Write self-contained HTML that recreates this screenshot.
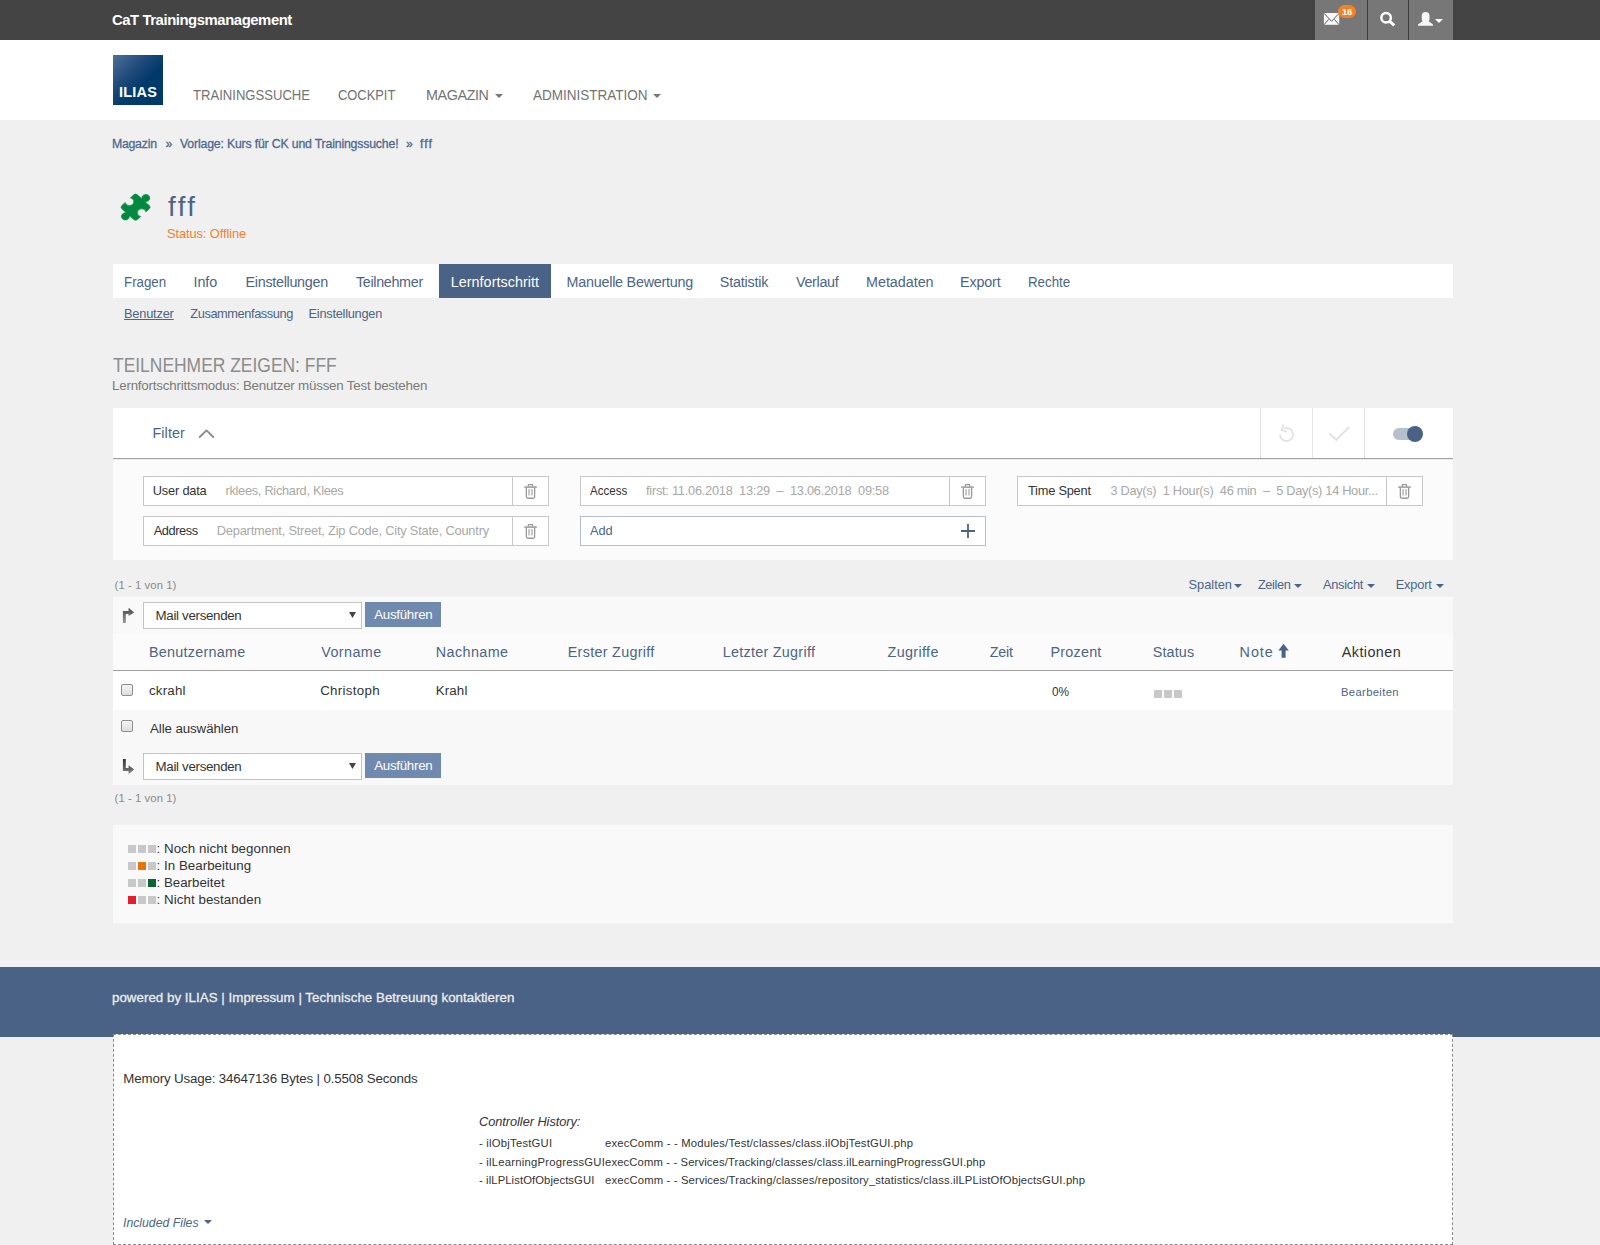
<!DOCTYPE html>
<html><head><meta charset="utf-8"><title>ILIAS</title>
<style>
html,body{margin:0;padding:0;}
body{width:1600px;height:1245px;overflow:hidden;position:relative;background:#f0f0f0;font-family:"Liberation Sans", sans-serif;}
</style></head><body>
<div style="position:absolute;left:0px;top:0px;width:1600px;height:40px;background:#444;"></div>
<div style="position:absolute;left:1315px;top:0px;width:138px;height:40px;background:#777;"></div>
<div style="position:absolute;left:1367px;top:0px;width:1px;height:40px;background:#3d3d3d;"></div>
<div style="position:absolute;left:1408px;top:0px;width:1px;height:40px;background:#3d3d3d;"></div>
<div style="position:absolute;left:0px;top:40px;width:1600px;height:80px;background:#fff;"></div>
<div style="position:absolute;left:113px;top:55px;width:50px;height:50px;background:linear-gradient(135deg,#4f6f99 0%,#1f4a7a 35%,#003a6b 60%,#003a6b 100%);"></div>
<div style="position:absolute;left:113px;top:82px;width:50px;text-align:center;font-weight:700;font-size:14.5px;line-height:20px;color:#fff;letter-spacing:0.2px">ILIAS</div>
<svg style="position:absolute;left:495px;top:94px" width="8" height="4" viewBox="0 0 8 4"><path d="M0 0H8L4 4Z" fill="#777"/></svg>
<svg style="position:absolute;left:653px;top:94px" width="8" height="4" viewBox="0 0 8 4"><path d="M0 0H8L4 4Z" fill="#777"/></svg>
<svg style="position:absolute;left:115px;top:188px" width="42" height="38" viewBox="0 0 42 38"><g transform="translate(20.6 19.2) scale(1.0 0.9) rotate(45)"><path d="M-8.4 -11 L-2.0 -11 A4.0 4.0 0 1 1 2.0 -11 L8.4 -11 Q11 -11 11 -8.4 L11 -3.6 A4.3 4.3 0 1 0 11 3.6 L11 8.4 Q11 11 8.4 11 L2.0 11 A4.0 4.0 0 1 1 -2.0 11 L-8.4 11 Q-11 11 -11 8.4 L-11 3.6 A4.3 4.3 0 1 0 -11 -3.6 L-11 -8.4 Q-11 -11 -8.4 -11 Z" fill="#02893f" stroke="#02893f" stroke-width="0.6" stroke-linejoin="round"/></g></svg>
<div style="position:absolute;left:113px;top:264px;width:1340px;height:34px;background:#fff;"></div>
<div style="position:absolute;left:439px;top:264px;width:112px;height:34px;background:#4a6286;"></div>
<div style="position:absolute;left:113px;top:408px;width:1340px;height:50px;background:#fff;"></div>
<div style="position:absolute;left:113px;top:458px;width:1340px;height:1px;background:#a0a0a0;"></div>
<div style="position:absolute;left:113px;top:459px;width:1340px;height:1px;background:#ececec;"></div>
<div style="position:absolute;left:113px;top:460px;width:1340px;height:100px;background:#fbfbfb;"></div>
<div style="position:absolute;left:1260px;top:408px;width:1px;height:50px;background:#e3e3e3;"></div>
<div style="position:absolute;left:1312px;top:408px;width:1px;height:50px;background:#e3e3e3;"></div>
<div style="position:absolute;left:1364px;top:408px;width:1px;height:50px;background:#e3e3e3;"></div>
<svg style="position:absolute;left:198px;top:428px" width="17" height="10" viewBox="0 0 17 10"><path d="M1.7 9 L8.5 2.4 L15.3 9" fill="none" stroke="#8a8a8a" stroke-width="1.8" stroke-linecap="round" stroke-linejoin="round"/></svg>
<svg style="position:absolute;left:1277px;top:424px" width="19" height="19" viewBox="0 0 19 19"><path d="M3.0 10.6 A6.5 6.5 0 1 0 7.4 4.4" fill="none" stroke="#e0e0e0" stroke-width="1.7"/><path d="M6.6 0.4 L4.7 5.9 L10 8.0" fill="none" stroke="#e0e0e0" stroke-width="1.7"/></svg>
<svg style="position:absolute;left:1327px;top:424px" width="25" height="19" viewBox="0 0 25 19"><path d="M2.6 9.4 L9.3 16 L22.3 2.9" fill="none" stroke="#e0e0e0" stroke-width="1.8"/></svg>
<svg style="position:absolute;left:1392px;top:425px" width="33" height="18" viewBox="0 0 33 18"><rect x="1" y="3" width="28" height="12" rx="6" fill="#b5bfcd"/><circle cx="23" cy="9" r="8" fill="#4a6286"/></svg>
<div style="position:absolute;left:143px;top:476px;width:406px;height:30px;background:#fff;border:1px solid #c8c8c8;box-sizing:border-box;"></div>
<div style="position:absolute;left:512px;top:476px;width:1px;height:30px;background:#c8c8c8;"></div>
<svg style="position:absolute;left:524px;top:483px" width="13" height="16" viewBox="0 0 13 16"><g fill="none" stroke="#999" stroke-width="1.3"><path d="M0.2 4.1 H12.8" stroke-width="1.5"/><path d="M3.9 3.6 L4.5 1.7 H8.4 L9 3.6" stroke-width="1.2"/><path d="M2.35 4.8 V13.6 Q2.35 15.25 4 15.25 H9 Q10.65 15.25 10.65 13.6 V4.8"/></g><path d="M5.05 6.1 V12.6 M8 6.1 V12.6" stroke="#bbb" stroke-width="1.6"/></svg>
<div style="position:absolute;left:143px;top:516px;width:406px;height:30px;background:#fff;border:1px solid #c8c8c8;box-sizing:border-box;"></div>
<div style="position:absolute;left:512px;top:516px;width:1px;height:30px;background:#c8c8c8;"></div>
<svg style="position:absolute;left:524px;top:523px" width="13" height="16" viewBox="0 0 13 16"><g fill="none" stroke="#999" stroke-width="1.3"><path d="M0.2 4.1 H12.8" stroke-width="1.5"/><path d="M3.9 3.6 L4.5 1.7 H8.4 L9 3.6" stroke-width="1.2"/><path d="M2.35 4.8 V13.6 Q2.35 15.25 4 15.25 H9 Q10.65 15.25 10.65 13.6 V4.8"/></g><path d="M5.05 6.1 V12.6 M8 6.1 V12.6" stroke="#bbb" stroke-width="1.6"/></svg>
<div style="position:absolute;left:580px;top:476px;width:406px;height:30px;background:#fff;border:1px solid #c8c8c8;box-sizing:border-box;"></div>
<div style="position:absolute;left:949px;top:476px;width:1px;height:30px;background:#c8c8c8;"></div>
<svg style="position:absolute;left:961px;top:483px" width="13" height="16" viewBox="0 0 13 16"><g fill="none" stroke="#999" stroke-width="1.3"><path d="M0.2 4.1 H12.8" stroke-width="1.5"/><path d="M3.9 3.6 L4.5 1.7 H8.4 L9 3.6" stroke-width="1.2"/><path d="M2.35 4.8 V13.6 Q2.35 15.25 4 15.25 H9 Q10.65 15.25 10.65 13.6 V4.8"/></g><path d="M5.05 6.1 V12.6 M8 6.1 V12.6" stroke="#bbb" stroke-width="1.6"/></svg>
<div style="position:absolute;left:580px;top:516px;width:406px;height:30px;background:#fff;border:1px solid #b3bfd0;box-sizing:border-box;"></div>
<svg style="position:absolute;left:960px;top:523px" width="16" height="16" viewBox="0 0 16 16"><path d="M8 1 V15 M1 8 H15" stroke="#4a6286" stroke-width="1.8"/></svg>
<div style="position:absolute;left:1017px;top:476px;width:406px;height:30px;background:#fff;border:1px solid #c8c8c8;box-sizing:border-box;"></div>
<div style="position:absolute;left:1386px;top:476px;width:1px;height:30px;background:#c8c8c8;"></div>
<svg style="position:absolute;left:1398px;top:483px" width="13" height="16" viewBox="0 0 13 16"><g fill="none" stroke="#999" stroke-width="1.3"><path d="M0.2 4.1 H12.8" stroke-width="1.5"/><path d="M3.9 3.6 L4.5 1.7 H8.4 L9 3.6" stroke-width="1.2"/><path d="M2.35 4.8 V13.6 Q2.35 15.25 4 15.25 H9 Q10.65 15.25 10.65 13.6 V4.8"/></g><path d="M5.05 6.1 V12.6 M8 6.1 V12.6" stroke="#bbb" stroke-width="1.6"/></svg>
<div style="position:absolute;left:113px;top:597px;width:1340px;height:37px;background:#f9f9f9;"></div>
<div style="position:absolute;left:113px;top:634px;width:1340px;height:35px;background:#fbfbfb;"></div>
<div style="position:absolute;left:113px;top:669px;width:1340px;height:1px;background:#fff;"></div>
<div style="position:absolute;left:113px;top:670px;width:1340px;height:1px;background:#a0a0a0;"></div>
<div style="position:absolute;left:113px;top:671px;width:1340px;height:39px;background:#fff;"></div>
<div style="position:absolute;left:113px;top:710px;width:1340px;height:75px;background:#f8f8f8;"></div>
<svg style="position:absolute;left:1234px;top:584px" width="8" height="4" viewBox="0 0 8 4"><path d="M0 0H8L4 4Z" fill="#4c6586"/></svg>
<svg style="position:absolute;left:1294px;top:584px" width="8" height="4" viewBox="0 0 8 4"><path d="M0 0H8L4 4Z" fill="#4c6586"/></svg>
<svg style="position:absolute;left:1367px;top:584px" width="8" height="4" viewBox="0 0 8 4"><path d="M0 0H8L4 4Z" fill="#4c6586"/></svg>
<svg style="position:absolute;left:1436px;top:584px" width="8" height="4" viewBox="0 0 8 4"><path d="M0 0H8L4 4Z" fill="#4c6586"/></svg>
<div style="position:absolute;left:143px;top:602px;width:219px;height:27px;background:#fff;border:1px solid #c4c4c4;box-sizing:border-box;"></div>
<svg style="position:absolute;left:349px;top:612px" width="7" height="6" viewBox="0 0 7 6"><path d="M0 0H7L3.5 6Z" fill="#444"/></svg>
<div style="position:absolute;left:365px;top:602px;width:76px;height:25px;background:#6f8aae;"></div>
<div style="position:absolute;left:143px;top:753px;width:219px;height:27px;background:#fff;border:1px solid #c4c4c4;box-sizing:border-box;"></div>
<svg style="position:absolute;left:349px;top:763px" width="7" height="6" viewBox="0 0 7 6"><path d="M0 0H7L3.5 6Z" fill="#444"/></svg>
<div style="position:absolute;left:365px;top:753px;width:76px;height:25px;background:#6f8aae;"></div>
<svg style="position:absolute;left:116px;top:602px" width="24" height="26" viewBox="0 0 24 26"><defs><linearGradient id="ga" x1="0" y1="0" x2="0" y2="1"><stop offset="0" stop-color="#4a4a4a"/><stop offset="1" stop-color="#999"/></linearGradient></defs><path d="M6.9 20.9 V9 H12.6 V5.8 L18.2 10.4 L12.6 14 V11.9 H9.8 V20.9 Z" fill="url(#ga)"/></svg>
<svg style="position:absolute;left:116px;top:753px" width="24" height="26" viewBox="0 0 24 26"><defs><linearGradient id="gb" x1="0" y1="0" x2="0" y2="1"><stop offset="0" stop-color="#333"/><stop offset="1" stop-color="#808080"/></linearGradient></defs><path d="M6.9 6 V18 H12.6 V21 L18.2 16.5 L12.6 12.3 V15 H9.8 V6 Z" fill="url(#gb)"/></svg>
<div style="position:absolute;left:121px;top:684px;width:12px;height:12px;background:linear-gradient(#f4f4f4,#dedede);border:1px solid #8e8e8e;border-radius:2px;box-sizing:border-box;"></div>
<div style="position:absolute;left:121px;top:720px;width:12px;height:12px;background:linear-gradient(#f4f4f4,#dedede);border:1px solid #8e8e8e;border-radius:2px;box-sizing:border-box;"></div>
<svg style="position:absolute;left:1278px;top:643px" width="12" height="15" viewBox="0 0 12 15"><path d="M5.5 0.8 L10.8 7.6 H7.6 V14.7 H3.6 V7.6 H0.4 Z" fill="#4a6286"/></svg>
<div style="position:absolute;left:1154px;top:690px;width:8px;height:8px;background:#c8c8c8;"></div>
<div style="position:absolute;left:1164px;top:690px;width:8px;height:8px;background:#c8c8c8;"></div>
<div style="position:absolute;left:1174px;top:690px;width:8px;height:8px;background:#c8c8c8;"></div>
<div style="position:absolute;left:113px;top:825px;width:1340px;height:98px;background:#f9f9f9;"></div>
<div style="position:absolute;left:128px;top:845px;width:8px;height:8px;background:#c8c8c8;"></div>
<div style="position:absolute;left:138px;top:845px;width:8px;height:8px;background:#c8c8c8;"></div>
<div style="position:absolute;left:148px;top:845px;width:8px;height:8px;background:#c8c8c8;"></div>
<div style="position:absolute;left:128px;top:862px;width:8px;height:8px;background:#c8c8c8;"></div>
<div style="position:absolute;left:138px;top:862px;width:8px;height:8px;background:#e8720c;"></div>
<div style="position:absolute;left:148px;top:862px;width:8px;height:8px;background:#c8c8c8;"></div>
<div style="position:absolute;left:128px;top:879px;width:8px;height:8px;background:#c8c8c8;"></div>
<div style="position:absolute;left:138px;top:879px;width:8px;height:8px;background:#c8c8c8;"></div>
<div style="position:absolute;left:148px;top:879px;width:8px;height:8px;background:#0a6630;"></div>
<div style="position:absolute;left:128px;top:896px;width:8px;height:8px;background:#e61e2b;"></div>
<div style="position:absolute;left:138px;top:896px;width:8px;height:8px;background:#c8c8c8;"></div>
<div style="position:absolute;left:148px;top:896px;width:8px;height:8px;background:#c8c8c8;"></div>
<div style="position:absolute;left:0px;top:967px;width:1600px;height:70px;background:#4a6286;"></div>
<div style="position:absolute;left:113px;top:1034px;width:1340px;height:211px;background:#fff;border:1px dashed #8a8a8a;box-sizing:border-box;"></div>
<svg style="position:absolute;left:204px;top:1220px" width="8" height="4" viewBox="0 0 8 4"><path d="M0 0H8L4 4Z" fill="#4c6586"/></svg>
<svg style="position:absolute;left:1323px;top:12px" width="17" height="14" viewBox="0 0 17 14"><rect x="0.9" y="1" width="15.3" height="11.8" fill="#f7f7f7"/><path d="M0.9 1.2 L8.5 9.3 L16.2 1.2 M0.9 12.8 L5.7 7.4 M16.2 12.8 L11.3 7.4" fill="none" stroke="#5a5a5a" stroke-width="1"/></svg>
<svg style="position:absolute;left:1338px;top:5px" width="18" height="13" viewBox="0 0 18 13"><rect x="0" y="0" width="18" height="13" rx="6.5" fill="#f5821f"/></svg>
<div style="position:absolute;left:1338px;top:5px;width:18px;text-align:center;font-weight:700;font-size:9.5px;line-height:13px;color:#fff;letter-spacing:-0.2px">16</div>
<svg style="position:absolute;left:1378px;top:10px" width="20" height="20" viewBox="0 0 20 20"><circle cx="8.1" cy="7.8" r="4.75" fill="none" stroke="#fff" stroke-width="2.5"/><path d="M11.4 11.2 L16.3 15.4" stroke="#fff" stroke-width="2.9"/></svg>
<svg style="position:absolute;left:1416px;top:10px" width="28" height="18" viewBox="0 0 28 18"><path d="M5.75 5.6 Q5.75 2 9.6 2 Q13.5 2 13.5 5.6 V9.4 Q13.5 10.5 12.5 11.1 L17 14.5 V15.75 H2 V14.5 L6.7 11.1 Q5.75 10.5 5.75 9.4 Z" fill="#f6f6f6"/><path d="M19 9 H27 L23 13 Z" fill="#fff"/></svg>
<div style="position:absolute;left:112.00px;top:10.00px;font-size:14.862px;font-weight:700;letter-spacing:-0.4364px;line-height:20px;white-space:pre;color:#ffffff;">CaT Trainingsmanagement</div>
<div style="position:absolute;left:192.50px;top:85.00px;font-size:14.350px;font-weight:400;letter-spacing:0.0000px;line-height:20px;white-space:pre;color:#737373;transform:scaleX(0.9121);transform-origin:0 0;">TRAININGSSUCHE</div>
<div style="position:absolute;left:338.40px;top:85.00px;font-size:14.350px;font-weight:400;letter-spacing:0.0000px;line-height:20px;white-space:pre;color:#737373;transform:scaleX(0.8984);transform-origin:0 0;">COCKPIT</div>
<div style="position:absolute;left:426.00px;top:85.00px;font-size:14.350px;font-weight:400;letter-spacing:-0.4000px;line-height:20px;white-space:pre;color:#737373;">MAGAZIN</div>
<div style="position:absolute;left:533.00px;top:85.00px;font-size:14.350px;font-weight:400;letter-spacing:0.0000px;line-height:20px;white-space:pre;color:#737373;transform:scaleX(0.9421);transform-origin:0 0;">ADMINISTRATION</div>
<div style="position:absolute;left:111.90px;top:134.00px;font-size:12.300px;font-weight:400;-webkit-text-stroke:0.3px currentColor;letter-spacing:-0.2333px;line-height:20px;white-space:pre;color:#4f6a8f;">Magazin</div>
<div style="position:absolute;left:165.60px;top:134.00px;font-size:12.300px;font-weight:400;-webkit-text-stroke:0.3px currentColor;letter-spacing:0.0000px;line-height:20px;white-space:pre;color:#4f6a8f;">»</div>
<div style="position:absolute;left:180.00px;top:134.00px;font-size:12.300px;font-weight:400;-webkit-text-stroke:0.3px currentColor;letter-spacing:-0.1795px;line-height:20px;white-space:pre;color:#4f6a8f;">Vorlage: Kurs für CK und Trainingssuche!</div>
<div style="position:absolute;left:406.00px;top:134.00px;font-size:12.300px;font-weight:400;-webkit-text-stroke:0.3px currentColor;letter-spacing:0.0000px;line-height:20px;white-space:pre;color:#4f6a8f;">»</div>
<div style="position:absolute;left:420.00px;top:134.00px;font-size:12.300px;font-weight:400;-webkit-text-stroke:0.3px currentColor;letter-spacing:1.0000px;line-height:20px;white-space:pre;color:#4f6a8f;">fff</div>
<div style="position:absolute;left:168.00px;top:197.00px;font-size:27.675px;font-weight:400;letter-spacing:2.5000px;line-height:20px;white-space:pre;color:#4c6586;">fff</div>
<div style="position:absolute;left:167.00px;top:224.00px;font-size:12.812px;font-weight:400;letter-spacing:-0.0714px;line-height:20px;white-space:pre;color:#f37f2b;">Status: Offline</div>
<div style="position:absolute;left:124.00px;top:272.30px;font-size:14.350px;font-weight:400;letter-spacing:0.0000px;line-height:20px;white-space:pre;color:#4c6586;transform:scaleX(0.9274);transform-origin:0 0;">Fragen</div>
<div style="position:absolute;left:193.40px;top:272.30px;font-size:14.350px;font-weight:400;letter-spacing:0.0000px;line-height:20px;white-space:pre;color:#4c6586;">Info</div>
<div style="position:absolute;left:245.60px;top:272.30px;font-size:14.350px;font-weight:400;letter-spacing:-0.3000px;line-height:20px;white-space:pre;color:#4c6586;">Einstellungen</div>
<div style="position:absolute;left:356.00px;top:272.30px;font-size:14.350px;font-weight:400;letter-spacing:-0.3333px;line-height:20px;white-space:pre;color:#4c6586;">Teilnehmer</div>
<div style="position:absolute;left:450.75px;top:272.30px;font-size:14.350px;font-weight:400;letter-spacing:0.0357px;line-height:20px;white-space:pre;color:#ffffff;">Lernfortschritt</div>
<div style="position:absolute;left:566.50px;top:272.30px;font-size:14.350px;font-weight:400;letter-spacing:-0.2353px;line-height:20px;white-space:pre;color:#4c6586;">Manuelle Bewertung</div>
<div style="position:absolute;left:719.75px;top:272.30px;font-size:14.350px;font-weight:400;letter-spacing:-0.1875px;line-height:20px;white-space:pre;color:#4c6586;">Statistik</div>
<div style="position:absolute;left:796.00px;top:272.30px;font-size:14.350px;font-weight:400;letter-spacing:-0.3333px;line-height:20px;white-space:pre;color:#4c6586;">Verlauf</div>
<div style="position:absolute;left:866.00px;top:272.30px;font-size:14.350px;font-weight:400;letter-spacing:-0.0250px;line-height:20px;white-space:pre;color:#4c6586;">Metadaten</div>
<div style="position:absolute;left:960.00px;top:272.30px;font-size:14.350px;font-weight:400;letter-spacing:-0.1600px;line-height:20px;white-space:pre;color:#4c6586;">Export</div>
<div style="position:absolute;left:1028.00px;top:272.30px;font-size:14.350px;font-weight:400;letter-spacing:0.0000px;line-height:20px;white-space:pre;color:#4c6586;transform:scaleX(0.9274);transform-origin:0 0;">Rechte</div>
<div style="position:absolute;left:124.00px;top:304.40px;font-size:12.812px;font-weight:400;letter-spacing:-0.2000px;line-height:20px;white-space:pre;color:#4c6586;text-decoration:underline;">Benutzer</div>
<div style="position:absolute;left:190.30px;top:304.40px;font-size:12.812px;font-weight:400;letter-spacing:-0.4143px;line-height:20px;white-space:pre;color:#4c6586;">Zusammenfassung</div>
<div style="position:absolute;left:308.50px;top:304.40px;font-size:12.812px;font-weight:400;letter-spacing:-0.2500px;line-height:20px;white-space:pre;color:#4c6586;">Einstellungen</div>
<div style="position:absolute;left:113.00px;top:355.00px;font-size:20.500px;font-weight:400;letter-spacing:0.0000px;line-height:20px;white-space:pre;color:#8c8c8c;transform:scaleX(0.8504);transform-origin:0 0;">TEILNEHMER ZEIGEN: FFF</div>
<div style="position:absolute;left:112.00px;top:376.00px;font-size:13.325px;font-weight:400;letter-spacing:-0.1961px;line-height:20px;white-space:pre;color:#7a7a7a;">Lernfortschrittsmodus: Benutzer müssen Test bestehen</div>
<div style="position:absolute;left:152.40px;top:422.75px;font-size:14.350px;font-weight:400;letter-spacing:0.1200px;line-height:20px;white-space:pre;color:#4c6586;">Filter</div>
<div style="position:absolute;left:152.75px;top:481.00px;font-size:12.812px;font-weight:400;letter-spacing:-0.1875px;line-height:20px;white-space:pre;color:#333;">User data</div>
<div style="position:absolute;left:225.50px;top:481.00px;font-size:12.812px;font-weight:400;letter-spacing:-0.2952px;line-height:20px;white-space:pre;color:#a8a8a8;">rklees, Richard, Klees</div>
<div style="position:absolute;left:153.75px;top:521.00px;font-size:12.812px;font-weight:400;letter-spacing:-0.4167px;line-height:20px;white-space:pre;color:#333;">Address</div>
<div style="position:absolute;left:216.75px;top:521.00px;font-size:12.812px;font-weight:400;letter-spacing:-0.1938px;line-height:20px;white-space:pre;color:#a8a8a8;">Department, Street, Zip Code, City State, Country</div>
<div style="position:absolute;left:590.00px;top:481.00px;font-size:12.812px;font-weight:400;letter-spacing:0.0000px;line-height:20px;white-space:pre;color:#333;transform:scaleX(0.9024);transform-origin:0 0;">Access</div>
<div style="position:absolute;left:646.00px;top:481.00px;font-size:12.812px;font-weight:400;letter-spacing:-0.2533px;line-height:20px;white-space:pre;color:#a8a8a8;white-space:pre;">first: 11.06.2018  13:29  –  13.06.2018  09:58</div>
<div style="position:absolute;left:590.00px;top:521.00px;font-size:12.812px;font-weight:400;letter-spacing:-0.1000px;line-height:20px;white-space:pre;color:#4c6586;">Add</div>
<div style="position:absolute;left:1028.00px;top:481.00px;font-size:12.812px;font-weight:400;letter-spacing:-0.2222px;line-height:20px;white-space:pre;color:#333;">Time Spent</div>
<div style="position:absolute;left:1110.40px;top:481.00px;font-size:12.812px;font-weight:400;letter-spacing:-0.3080px;line-height:20px;white-space:pre;color:#a8a8a8;white-space:pre;">3 Day(s)  1 Hour(s)  46 min  –  5 Day(s) 14 Hour...</div>
<div style="position:absolute;left:114.60px;top:575.40px;font-size:11.275px;font-weight:400;letter-spacing:0.0833px;line-height:20px;white-space:pre;color:#8a8a8a;">(1 - 1 von 1)</div>
<div style="position:absolute;left:1188.60px;top:574.70px;font-size:12.812px;font-weight:400;letter-spacing:-0.0167px;line-height:20px;white-space:pre;color:#4c6586;">Spalten</div>
<div style="position:absolute;left:1257.90px;top:574.70px;font-size:12.812px;font-weight:400;letter-spacing:-0.3800px;line-height:20px;white-space:pre;color:#4c6586;">Zeilen</div>
<div style="position:absolute;left:1323.00px;top:574.70px;font-size:12.812px;font-weight:400;letter-spacing:-0.2667px;line-height:20px;white-space:pre;color:#4c6586;">Ansicht</div>
<div style="position:absolute;left:1395.70px;top:574.70px;font-size:12.812px;font-weight:400;letter-spacing:-0.1600px;line-height:20px;white-space:pre;color:#4c6586;">Export</div>
<div style="position:absolute;left:155.50px;top:605.75px;font-size:13.325px;font-weight:400;letter-spacing:-0.3077px;line-height:20px;white-space:pre;color:#333;">Mail versenden</div>
<div style="position:absolute;left:374.20px;top:604.90px;font-size:13.325px;font-weight:400;letter-spacing:-0.2750px;line-height:20px;white-space:pre;color:#ffffff;">Ausführen</div>
<div style="position:absolute;left:149.00px;top:642.00px;font-size:14.350px;font-weight:400;letter-spacing:0.2727px;line-height:20px;white-space:pre;color:#4c6586;">Benutzername</div>
<div style="position:absolute;left:321.20px;top:642.00px;font-size:14.350px;font-weight:400;letter-spacing:0.4333px;line-height:20px;white-space:pre;color:#4c6586;">Vorname</div>
<div style="position:absolute;left:435.70px;top:642.00px;font-size:14.350px;font-weight:400;letter-spacing:0.4286px;line-height:20px;white-space:pre;color:#4c6586;">Nachname</div>
<div style="position:absolute;left:567.70px;top:642.00px;font-size:14.350px;font-weight:400;letter-spacing:0.3077px;line-height:20px;white-space:pre;color:#4c6586;">Erster Zugriff</div>
<div style="position:absolute;left:722.75px;top:642.00px;font-size:14.350px;font-weight:400;letter-spacing:0.2786px;line-height:20px;white-space:pre;color:#4c6586;">Letzter Zugriff</div>
<div style="position:absolute;left:887.60px;top:642.00px;font-size:14.350px;font-weight:400;letter-spacing:0.3429px;line-height:20px;white-space:pre;color:#4c6586;">Zugriffe</div>
<div style="position:absolute;left:989.80px;top:642.00px;font-size:14.350px;font-weight:400;letter-spacing:-0.2667px;line-height:20px;white-space:pre;color:#4c6586;">Zeit</div>
<div style="position:absolute;left:1050.50px;top:642.00px;font-size:14.350px;font-weight:400;letter-spacing:0.2333px;line-height:20px;white-space:pre;color:#4c6586;">Prozent</div>
<div style="position:absolute;left:1152.70px;top:642.00px;font-size:14.350px;font-weight:400;letter-spacing:0.1600px;line-height:20px;white-space:pre;color:#4c6586;">Status</div>
<div style="position:absolute;left:1239.60px;top:642.00px;font-size:14.350px;font-weight:400;letter-spacing:0.9333px;line-height:20px;white-space:pre;color:#4c6586;">Note</div>
<div style="position:absolute;left:1341.80px;top:642.00px;font-size:14.350px;font-weight:400;letter-spacing:0.4286px;line-height:20px;white-space:pre;color:#333;">Aktionen</div>
<div style="position:absolute;left:149.00px;top:680.75px;font-size:13.325px;font-weight:400;letter-spacing:0.2000px;line-height:20px;white-space:pre;color:#333;">ckrahl</div>
<div style="position:absolute;left:320.20px;top:680.75px;font-size:13.325px;font-weight:400;letter-spacing:0.3000px;line-height:20px;white-space:pre;color:#333;">Christoph</div>
<div style="position:absolute;left:435.70px;top:680.75px;font-size:13.325px;font-weight:400;letter-spacing:0.1500px;line-height:20px;white-space:pre;color:#333;">Krahl</div>
<div style="position:absolute;left:1051.90px;top:681.60px;font-size:12.300px;font-weight:400;letter-spacing:0.0000px;line-height:20px;white-space:pre;color:#333;transform:scaleX(0.9612);transform-origin:0 0;">0%</div>
<div style="position:absolute;left:1341.00px;top:681.60px;font-size:11.275px;font-weight:400;letter-spacing:0.3333px;line-height:20px;white-space:pre;color:#4c6586;">Bearbeiten</div>
<div style="position:absolute;left:150.00px;top:718.70px;font-size:13.325px;font-weight:400;letter-spacing:-0.0923px;line-height:20px;white-space:pre;color:#333;">Alle auswählen</div>
<div style="position:absolute;left:155.50px;top:756.75px;font-size:13.325px;font-weight:400;letter-spacing:-0.3077px;line-height:20px;white-space:pre;color:#333;">Mail versenden</div>
<div style="position:absolute;left:374.20px;top:755.90px;font-size:13.325px;font-weight:400;letter-spacing:-0.2750px;line-height:20px;white-space:pre;color:#ffffff;">Ausführen</div>
<div style="position:absolute;left:114.60px;top:787.90px;font-size:11.275px;font-weight:400;letter-spacing:0.0833px;line-height:20px;white-space:pre;color:#8a8a8a;">(1 - 1 von 1)</div>
<div style="position:absolute;left:156.50px;top:838.90px;font-size:13.325px;font-weight:400;letter-spacing:0.0500px;line-height:20px;white-space:pre;color:#333;">: Noch nicht begonnen</div>
<div style="position:absolute;left:156.50px;top:855.90px;font-size:13.325px;font-weight:400;letter-spacing:0.0400px;line-height:20px;white-space:pre;color:#333;">: In Bearbeitung</div>
<div style="position:absolute;left:156.50px;top:872.90px;font-size:13.325px;font-weight:400;letter-spacing:0.0000px;line-height:20px;white-space:pre;color:#333;">: Bearbeitet</div>
<div style="position:absolute;left:156.50px;top:889.90px;font-size:13.325px;font-weight:400;letter-spacing:0.0625px;line-height:20px;white-space:pre;color:#333;">: Nicht bestanden</div>
<div style="position:absolute;left:112.00px;top:988.20px;font-size:13.325px;font-weight:400;-webkit-text-stroke:0.3px currentColor;letter-spacing:0.0317px;line-height:20px;white-space:pre;color:#eeeeee;">powered by ILIAS | Impressum | Technische Betreuung kontaktieren</div>
<div style="position:absolute;left:123.25px;top:1068.50px;font-size:13.325px;font-weight:400;letter-spacing:-0.1477px;line-height:20px;white-space:pre;color:#333;">Memory Usage: 34647136 Bytes | 0.5508 Seconds</div>
<div style="position:absolute;left:479.00px;top:1111.60px;font-size:12.812px;font-weight:400;letter-spacing:-0.0556px;line-height:20px;white-space:pre;color:#333;font-style:italic;">Controller History:</div>
<div style="position:absolute;left:479.00px;top:1132.80px;font-size:11.275px;font-weight:400;letter-spacing:0.2308px;line-height:20px;white-space:pre;color:#333;">- ilObjTestGUI</div>
<div style="position:absolute;left:605.00px;top:1132.80px;font-size:11.275px;font-weight:400;letter-spacing:0.1818px;line-height:20px;white-space:pre;color:#333;">execComm - - Modules/Test/classes/class.ilObjTestGUI.php</div>
<div style="position:absolute;left:479.00px;top:1151.80px;font-size:11.275px;font-weight:400;letter-spacing:0.2273px;line-height:20px;white-space:pre;color:#333;">- ilLearningProgressGUI</div>
<div style="position:absolute;left:605.00px;top:1151.80px;font-size:11.275px;font-weight:400;letter-spacing:0.1275px;line-height:20px;white-space:pre;color:#333;">execComm - - Services/Tracking/classes/class.ilLearningProgressGUI.php</div>
<div style="position:absolute;left:479.00px;top:1170.30px;font-size:11.275px;font-weight:400;letter-spacing:0.0952px;line-height:20px;white-space:pre;color:#333;">- ilLPListOfObjectsGUI</div>
<div style="position:absolute;left:605.00px;top:1170.30px;font-size:11.275px;font-weight:400;letter-spacing:0.1556px;line-height:20px;white-space:pre;color:#333;">execComm - - Services/Tracking/classes/repository_statistics/class.ilLPListOfObjectsGUI.php</div>
<div style="position:absolute;left:123.25px;top:1213.00px;font-size:13.325px;font-weight:400;letter-spacing:0.0000px;line-height:20px;white-space:pre;color:#4c6586;transform:scaleX(0.9198);transform-origin:0 0;font-style:italic;">Included Files</div>
</body></html>
